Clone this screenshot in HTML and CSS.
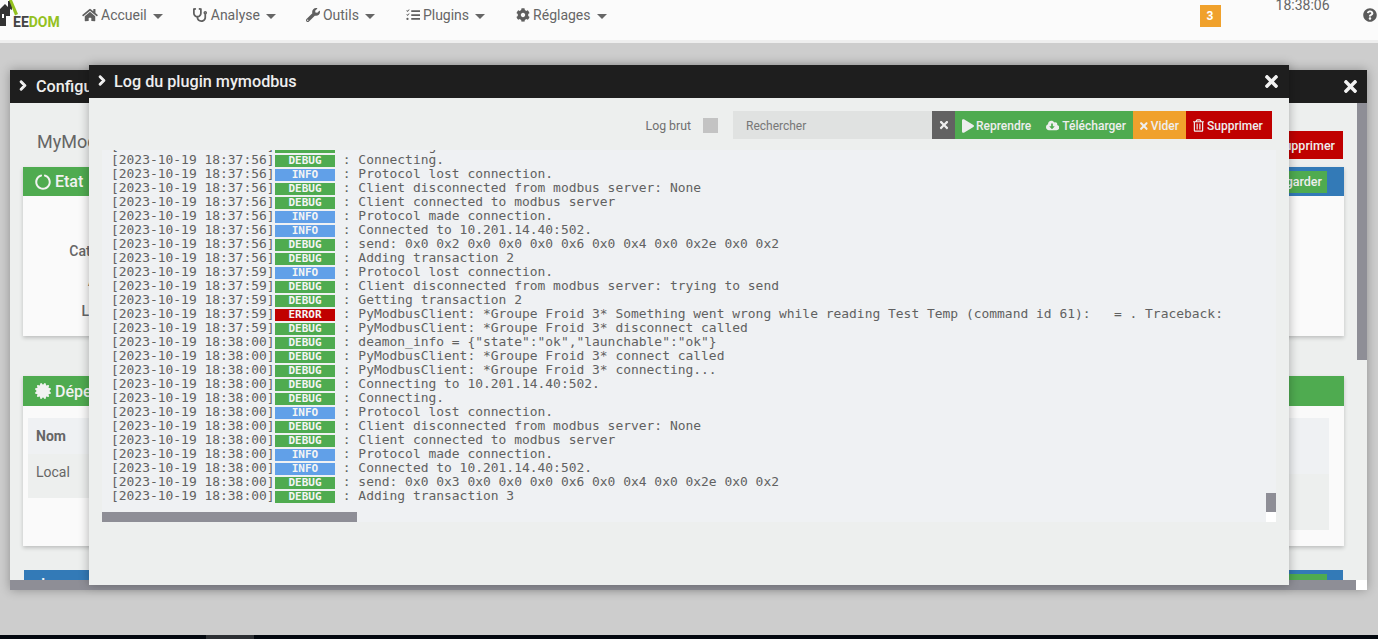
FILE: index.html
```html
<!DOCTYPE html>
<html lang="fr">
<head>
<meta charset="utf-8">
<title>Log du plugin mymodbus</title>
<link rel="stylesheet" href="styles.css">
</head>
<body>
<svg class="sprites" aria-hidden="true">
  <symbol id="i-home" viewBox="0 0 576 512"><path d="M280.37 148.26L96 300.11V464a16 16 0 0 0 16 16l112.06-.29a16 16 0 0 0 15.92-16V368a16 16 0 0 1 16-16h64a16 16 0 0 1 16 16v95.64a16 16 0 0 0 16 16.05L464 480a16 16 0 0 0 16-16V300L295.67 148.26a12.19 12.19 0 0 0-15.3 0zM571.6 251.47L488 182.56V44.05a12 12 0 0 0-12-12h-56a12 12 0 0 0-12 12v72.61L318.47 43a48 48 0 0 0-61 0L4.34 251.47a12 12 0 0 0-1.6 16.9l25.5 31A12 12 0 0 0 45.15 301l235.22-193.74a12.19 12.19 0 0 1 15.3 0L530.9 301a12 12 0 0 0 16.9-1.6l25.5-31a12 12 0 0 0-1.7-16.93z"/></symbol>
  <symbol id="i-steth" viewBox="0 0 512 512"><path d="M447.1 112c-34.2.5-62.3 28.4-63 62.6-.5 24.3 12.5 45.6 32 56.8V344c0 57.3-50.2 104-112 104-60 0-109.2-44.1-111.9-99.2C265 333.8 320 269.2 320 192V36.6c0-11.4-8.1-21.3-19.3-23.5L237.8.5c-13-2.6-25.6 5.8-28.2 18.8L206.4 35c-2.6 13 5.8 25.6 18.8 28.2l30.7 6.1v121.4c0 52.9-42.2 96.7-95.1 97.2-53.4.5-96.9-42.7-96.9-96V69.4l30.7-6.1c13-2.6 21.4-15.2 18.8-28.2l-3.1-15.7C107.7 6.4 95.1-2 82.1.6L19.3 13C8.1 15.3 0 25.1 0 36.6V192c0 77.3 55.1 142 128.1 156.8C130.7 439.2 208.6 512 304 512c97 0 176-75.4 176-168V231.4c19.1-11.1 32-31.7 32-55.4 0-35.7-29.2-64.5-64.9-64zm.9 80c-8.8 0-16-7.2-16-16s7.2-16 16-16 16 7.2 16 16-7.2 16-16 16z"/></symbol>
  <symbol id="i-wrench" viewBox="0 0 512 512"><path d="M507.73 109.1c-2.24-9.03-13.54-12.09-20.12-5.51l-74.36 74.36-67.88-11.31-11.31-67.88 74.36-74.36c6.62-6.62 3.43-17.9-5.66-20.16-47.38-11.74-99.55.91-136.58 37.93-39.64 39.64-50.55 97.1-34.05 147.2L18.74 402.76c-24.99 24.99-24.99 65.51 0 90.5 24.99 24.99 65.51 24.99 90.5 0l213.21-213.21c50.12 16.71 107.47 5.68 147.37-34.22 37.07-37.07 49.7-89.32 37.91-136.73zM64 472c-13.25 0-24-10.75-24-24 0-13.26 10.75-24 24-24s24 10.74 24 24c0 13.25-10.75 24-24 24z"/></symbol>
  <symbol id="i-tasks" viewBox="0 0 16 14"><path d="M6 1.5h10v2H6zM6 6h10v2H6zM6 10.500h10v2H6zM.4 2 1 1.400l.8.8L3.500.4l.6.6-2.300 2.500zM.4 6.500 1 5.900l.8.8 1.700-1.800.6.600-2.300 2.500z"/><circle cx="1.700" cy="11.500" r="1.300"/></symbol>
  <symbol id="i-cog" viewBox="0 0 512 512"><path d="M487.4 315.7l-42.6-24.6c4.3-23.2 4.3-47 0-70.2l42.6-24.6c4.9-2.8 7.1-8.6 5.5-14-11.1-35.6-30-67.8-54.7-94.6-3.8-4.1-10-5.1-14.8-2.3L380.8 110c-17.9-15.4-38.5-27.3-60.8-35.1V25.8c0-5.6-3.9-10.5-9.4-11.7-36.7-8.2-74.3-7.8-109.2 0-5.5 1.2-9.4 6.1-9.4 11.7V75c-22.2 7.9-42.8 19.8-60.8 35.1L88.7 85.5c-4.9-2.8-11-1.9-14.8 2.3-24.7 26.7-43.6 58.9-54.7 94.6-1.7 5.4.6 11.2 5.5 14L67.3 221c-4.3 23.2-4.3 47 0 70.2l-42.6 24.6c-4.9 2.8-7.1 8.6-5.5 14 11.1 35.6 30 67.8 54.7 94.6 3.8 4.1 10 5.1 14.8 2.3l42.6-24.6c17.9 15.4 38.5 27.3 60.8 35.1v49.2c0 5.6 3.9 10.5 9.4 11.7 36.7 8.2 74.3 7.8 109.2 0 5.5-1.2 9.4-6.1 9.4-11.7v-49.2c22.2-7.9 42.8-19.8 60.8-35.1l42.6 24.6c4.9 2.8 11 1.9 14.8-2.3 24.7-26.7 43.6-58.9 54.7-94.6 1.5-5.5-.7-11.3-5.6-14.1zM256 336c-44.1 0-80-35.9-80-80s35.9-80 80-80 80 35.9 80 80-35.9 80-80 80z"/></symbol>
  <symbol id="i-question" viewBox="0 0 512 512"><path d="M504 256c0 136.997-111.043 248-248 248S8 392.997 8 256C8 119.083 119.043 8 256 8s248 111.083 248 248zM262.655 90c-54.497 0-89.255 22.957-116.549 63.758-3.536 5.286-2.353 12.415 2.715 16.258l34.699 26.31c5.205 3.947 12.621 3.008 16.665-2.122 17.864-22.658 30.113-35.797 57.303-35.797 20.429 0 45.698 13.148 45.698 32.958 0 14.976-12.363 22.667-32.534 33.976C247.128 238.528 216 254.941 216 296v4c0 6.627 5.373 12 12 12h56c6.627 0 12-5.373 12-12v-1.333c0-28.462 83.186-29.647 83.186-106.667 0-58.002-60.165-102-116.531-102zM256 338c-25.365 0-46 20.635-46 46 0 25.364 20.635 46 46 46s46-20.636 46-46c0-25.365-20.635-46-46-46z"/></symbol>
  <symbol id="i-times" viewBox="0 0 352 512"><path d="M242.72 256l100.07-100.07c12.28-12.28 12.28-32.19 0-44.48l-22.24-22.24c-12.28-12.28-32.19-12.28-44.48 0L176 189.28 75.930 89.21c-12.28-12.28-32.19-12.28-44.48 0L9.210 111.45c-12.28 12.28-12.28 32.19 0 44.48L109.28 256 9.210 356.07c-12.28 12.28-12.28 32.19 0 44.48l22.24 22.24c12.28 12.28 32.2 12.28 44.48 0L176 322.72l100.07 100.07c12.28 12.28 32.2 12.28 44.48 0l22.24-22.24c12.28-12.28 12.28-32.19 0-44.48L242.72 256z"/></symbol>
  <symbol id="i-play" viewBox="0 0 448 512"><path d="M424.4 214.7L72.4 6.6C43.8-10.3 0 6.1 0 47.9V464c0 37.5 40.7 60.1 72.4 41.3l352-208c31.4-18.5 31.5-64.1 0-82.6z"/></symbol>
  <symbol id="i-cloud" viewBox="0 0 640 512"><path d="M537.6 226.6c4.1-10.7 6.4-22.4 6.4-34.6 0-53-43-96-96-96-19.7 0-38.1 6-53.3 16.2C367 64.2 315.3 32 256 32c-88.4 0-160 71.6-160 160 0 2.7.1 5.4.2 8.1C40.2 219.8 0 273.2 0 336c0 79.5 64.5 144 144 144h368c70.7 0 128-57.3 128-128 0-61.9-44-113.6-102.4-125.4zm-132.9 88.7L299.3 420.7c-6.2 6.2-16.4 6.2-22.6 0L171.3 315.3c-10.1-10.1-2.9-27.3 11.3-27.3H248V176c0-8.8 7.2-16 16-16h48c8.8 0 16 7.2 16 16v112h65.4c14.2 0 21.4 17.2 11.3 27.3z"/></symbol>
  <symbol id="i-trash" viewBox="0 0 448 512"><path d="M268 416h24a12 12 0 0 0 12-12V188a12 12 0 0 0-12-12h-24a12 12 0 0 0-12 12v216a12 12 0 0 0 12 12zM432 80h-82.41l-34-56.7A48 48 0 0 0 274.41 0H173.59a48 48 0 0 0-41.16 23.3L98.41 80H16A16 16 0 0 0 0 96v16a16 16 0 0 0 16 16h16v336a48 48 0 0 0 48 48h288a48 48 0 0 0 48-48V128h16a16 16 0 0 0 16-16V96a16 16 0 0 0-16-16zM171.84 50.91A6 6 0 0 1 177 48h94a6 6 0 0 1 5.15 2.91L293.61 80H154.39zM368 464H80V128h288zm-212-48h24a12 12 0 0 0 12-12V188a12 12 0 0 0-12-12h-24a12 12 0 0 0-12 12v216a12 12 0 0 0 12 12z"/></symbol>
  <symbol id="i-chevron" viewBox="0 0 320 512"><path d="M285.476 272.971L91.132 467.314c-9.373 9.373-24.569 9.373-33.941 0l-22.667-22.667c-9.357-9.357-9.375-24.522-.04-33.901L188.505 256 34.484 101.255c-9.335-9.379-9.317-24.544.04-33.901l22.667-22.667c9.373-9.373 24.569-9.373 33.941 0L285.475 239.03c9.373 9.372 9.373 24.568.001 33.941z"/></symbol>
  <symbol id="i-notch" viewBox="0 0 512 512"><path d="M288 39.056v16.659c0 10.804 7.281 20.159 17.686 23.066C383.204 100.434 440 171.518 440 256c0 101.689-82.295 184-184 184-101.689 0-184-82.295-184-184 0-84.47 56.786-155.564 134.312-177.219C216.719 75.874 224 66.517 224 55.712V39.064c0-15.709-14.834-27.153-30.046-23.234C86.603 43.482 7.394 141.206 8.003 257.332c.72 137.052 111.477 246.956 248.531 246.667C393.255 503.711 504 392.788 504 256c0-115.633-79.14-212.779-186.211-240.236C302.678 11.889 288 23.456 288 39.056z"/></symbol>
  <symbol id="i-cert" viewBox="0 0 512 512"><path d="M458.622 255.92l45.985-45.005c13.708-12.977 7.316-36.039-10.664-40.339l-62.65-15.99 17.661-62.015c4.991-17.838-11.829-34.663-29.661-29.671l-61.994 17.667-15.984-62.671C337.085.197 313.765-6.276 300.99 7.228L256 53.57 211.011 7.229c-12.63-13.351-36.047-7.234-40.325 10.668l-15.984 62.671-61.995-17.667C74.87 57.907 58.056 74.738 63.046 92.572l17.661 62.015-62.65 15.99C.069 174.878-6.31 197.944 7.392 210.915l45.985 45.005-45.985 45.004c-13.708 12.977-7.316 36.039 10.664 40.339l62.65 15.99-17.661 62.015c-4.991 17.838 11.829 34.663 29.661 29.671l61.994-17.667 15.984 62.671c4.439 18.575 27.696 24.018 40.325 10.668L256 458.61l44.989 46.001c12.5 13.488 35.987 7.486 40.325-10.668l15.984-62.671 61.994 17.667c17.836 4.994 34.651-11.837 29.661-29.671l-17.661-62.015 62.65-15.99c17.987-4.302 24.366-27.367 10.664-40.339l-45.984-45.004z"/></symbol>
</svg>

<header class="navbar">
  <div class="brand">
    <svg class="brand-mark" viewBox="0 0 20 27" aria-hidden="true">
      <path class="brand-house" d="M0 9 5 4 8 7V1h4v9l-2-1v7H6v10H0z"/>
      <path class="brand-roof" d="M9 0h3l6 14-3 1.500z"/>
      <path class="brand-door" d="M2 14h2v4H2z"/>
    </svg>
    <span class="brand-name"><span class="brand-dark">EE</span>DOM</span>
  </div>
  <nav class="menu">
    <a class="menu-item"><svg class="ico ico-home"><use href="#i-home"/></svg>Accueil<i class="caret"></i></a>
    <a class="menu-item"><svg class="ico"><use href="#i-steth"/></svg>Analyse<i class="caret"></i></a>
    <a class="menu-item menu-item-spaced"><svg class="ico ico-tight"><use href="#i-wrench"/></svg>Outils<i class="caret"></i></a>
    <a class="menu-item menu-item-spaced"><svg class="ico ico-tight"><use href="#i-tasks"/></svg>Plugins<i class="caret"></i></a>
    <a class="menu-item"><svg class="ico ico-tight"><use href="#i-cog"/></svg>Réglages<i class="caret"></i></a>
  </nav>
  <div class="nav-right">
    <span class="badge-count">3</span>
    <span class="clock">18:38:06</span>
    <svg class="ico-help"><use href="#i-question"/></svg>
  </div>
</header>

<main class="stage">
  <section class="dialog dialog-back">
    <div class="dialog-title">
      <svg class="title-chevron"><use href="#i-chevron"/></svg>
      <span class="title-text">Configuration du plugin</span>
      <svg class="title-close"><use href="#i-times"/></svg>
    </div>
    <div class="back-body">
      <div class="back-head">
        <span class="back-name">MyModbus</span>
        <span class="back-btn red">Supprimer</span>
      </div>
      <div class="back-row">
        <article class="card card-state">
          <h3 class="card-head green"><svg class="card-ico"><use href="#i-notch"/></svg>Etat</h3>
          <div class="card-fields">
            <span class="field">Catégorie</span>
            <span class="field">Auteur</span>
            <span class="field">Licence</span>
          </div>
        </article>
        <article class="card">
          <div class="card-head blue card-head-right"><span class="back-btn green small">Sauvegarder</span></div>
        </article>
      </div>
      <article class="card card-deps">
        <h3 class="card-head green tall"><svg class="card-ico"><use href="#i-cert"/></svg>Dépendances</h3>
        <div class="deps-table">
          <div class="deps-col-left">
            <div class="deps-th">Nom</div>
            <div class="deps-td">Local</div>
          </div>
          <div class="deps-col-right">
            <div class="deps-rh"></div>
            <div class="deps-rd"></div>
          </div>
        </div>
      </article>
      <div class="card-head blue last-head"><span class="last-title">Logs</span><span class="last-btn"></span></div>
    </div>
    <div class="bar bar-back-h"></div>
    <div class="bar bar-back-v"></div>
    <div class="corner corner-back"></div>
  </section>

  <section class="dialog dialog-front">
    <div class="dialog-title">
      <svg class="title-chevron"><use href="#i-chevron"/></svg>
      <span class="title-text">Log du plugin mymodbus</span>
      <svg class="title-close"><use href="#i-times"/></svg>
    </div>
    <div class="front-body">
      <div class="toolbar">
        <span class="raw-label">Log brut</span>
        <span class="raw-check"></span>
        <span class="search">Rechercher</span>
        <span class="tbtn grey"><svg class="tico tico-x"><use href="#i-times"/></svg></span>
        <span class="tbtn green t-resume"><svg class="tico tico-play"><use href="#i-play"/></svg>Reprendre</span>
        <span class="tbtn green t-dl"><svg class="tico tico-cloud"><use href="#i-cloud"/></svg>Télécharger</span>
        <span class="tbtn orange t-clear"><svg class="tico tico-x"><use href="#i-times"/></svg>Vider</span>
        <span class="tbtn red t-del"><svg class="tico tico-trash"><use href="#i-trash"/></svg>Supprimer</span>
      </div>
      <div class="log">
        <div class="log-lines">
          <div class="row"><span class="ts">[2023-10-19 18:37:56]</span><span class="lvl debug">DEBUG</span><span class="msg"> : Connecting to 10.201.14.40:502.</span></div>
          <div class="row"><span class="ts">[2023-10-19 18:37:56]</span><span class="lvl debug">DEBUG</span><span class="msg"> : Connecting.</span></div>
          <div class="row"><span class="ts">[2023-10-19 18:37:56]</span><span class="lvl info">INFO</span><span class="msg"> : Protocol lost connection.</span></div>
          <div class="row"><span class="ts">[2023-10-19 18:37:56]</span><span class="lvl debug">DEBUG</span><span class="msg"> : Client disconnected from modbus server: None</span></div>
          <div class="row"><span class="ts">[2023-10-19 18:37:56]</span><span class="lvl debug">DEBUG</span><span class="msg"> : Client connected to modbus server</span></div>
          <div class="row"><span class="ts">[2023-10-19 18:37:56]</span><span class="lvl info">INFO</span><span class="msg"> : Protocol made connection.</span></div>
          <div class="row"><span class="ts">[2023-10-19 18:37:56]</span><span class="lvl info">INFO</span><span class="msg"> : Connected to 10.201.14.40:502.</span></div>
          <div class="row"><span class="ts">[2023-10-19 18:37:56]</span><span class="lvl debug">DEBUG</span><span class="msg"> : send: 0x0 0x2 0x0 0x0 0x0 0x6 0x0 0x4 0x0 0x2e 0x0 0x2</span></div>
          <div class="row"><span class="ts">[2023-10-19 18:37:56]</span><span class="lvl debug">DEBUG</span><span class="msg"> : Adding transaction 2</span></div>
          <div class="row"><span class="ts">[2023-10-19 18:37:59]</span><span class="lvl info">INFO</span><span class="msg"> : Protocol lost connection.</span></div>
          <div class="row"><span class="ts">[2023-10-19 18:37:59]</span><span class="lvl debug">DEBUG</span><span class="msg"> : Client disconnected from modbus server: trying to send</span></div>
          <div class="row"><span class="ts">[2023-10-19 18:37:59]</span><span class="lvl debug">DEBUG</span><span class="msg"> : Getting transaction 2</span></div>
          <div class="row"><span class="ts">[2023-10-19 18:37:59]</span><span class="lvl error">ERROR</span><span class="msg"> : PyModbusClient: *Groupe Froid 3* Something went wrong while reading Test Temp (command id 61):   = . Traceback:</span></div>
          <div class="row"><span class="ts">[2023-10-19 18:37:59]</span><span class="lvl debug">DEBUG</span><span class="msg"> : PyModbusClient: *Groupe Froid 3* disconnect called</span></div>
          <div class="row"><span class="ts">[2023-10-19 18:38:00]</span><span class="lvl debug">DEBUG</span><span class="msg"> : deamon_info = {"state":"ok","launchable":"ok"}</span></div>
          <div class="row"><span class="ts">[2023-10-19 18:38:00]</span><span class="lvl debug">DEBUG</span><span class="msg"> : PyModbusClient: *Groupe Froid 3* connect called</span></div>
          <div class="row"><span class="ts">[2023-10-19 18:38:00]</span><span class="lvl debug">DEBUG</span><span class="msg"> : PyModbusClient: *Groupe Froid 3* connecting...</span></div>
          <div class="row"><span class="ts">[2023-10-19 18:38:00]</span><span class="lvl debug">DEBUG</span><span class="msg"> : Connecting to 10.201.14.40:502.</span></div>
          <div class="row"><span class="ts">[2023-10-19 18:38:00]</span><span class="lvl debug">DEBUG</span><span class="msg"> : Connecting.</span></div>
          <div class="row"><span class="ts">[2023-10-19 18:38:00]</span><span class="lvl info">INFO</span><span class="msg"> : Protocol lost connection.</span></div>
          <div class="row"><span class="ts">[2023-10-19 18:38:00]</span><span class="lvl debug">DEBUG</span><span class="msg"> : Client disconnected from modbus server: None</span></div>
          <div class="row"><span class="ts">[2023-10-19 18:38:00]</span><span class="lvl debug">DEBUG</span><span class="msg"> : Client connected to modbus server</span></div>
          <div class="row"><span class="ts">[2023-10-19 18:38:00]</span><span class="lvl info">INFO</span><span class="msg"> : Protocol made connection.</span></div>
          <div class="row"><span class="ts">[2023-10-19 18:38:00]</span><span class="lvl info">INFO</span><span class="msg"> : Connected to 10.201.14.40:502.</span></div>
          <div class="row"><span class="ts">[2023-10-19 18:38:00]</span><span class="lvl debug">DEBUG</span><span class="msg"> : send: 0x0 0x3 0x0 0x0 0x0 0x6 0x0 0x4 0x0 0x2e 0x0 0x2</span></div>
          <div class="row"><span class="ts">[2023-10-19 18:38:00]</span><span class="lvl debug">DEBUG</span><span class="msg"> : Adding transaction 3</span></div>
        </div>
        <div class="bar bar-log-h"></div>
        <div class="bar bar-log-v"></div>
        <div class="corner corner-log"></div>
      </div>
    </div>
  </section>
</main>

<footer class="taskbar"><span class="task-tab"></span></footer>
</body>
</html>
```

FILE: styles.css
```css
* { box-sizing: border-box; }

html, body { height: 100%; }

body {
  margin: 0;
  height: 100vh;
  display: flex;
  flex-direction: column;
  overflow: hidden;
  background: #cdcdcd;
  color: #666;
  font-family: Roboto, "Liberation Sans", sans-serif;
  font-size: 14px;
}

.sprites { display: none; }

/* Navbar */
.navbar {
  flex: none;
  height: 43px;
  display: flex;
  background: #fbfbfb;
  border-bottom: 3px solid #eeeeee;
  position: relative;
}

.brand { width: 82px; height: 30px; flex: none; position: relative; overflow: hidden; }
.brand-mark { position: absolute; left: 0; top: 0; width: 20px; height: 27px; }
.brand-house { fill: #333; }
.brand-roof { fill: #94c11f; }
.brand-door { fill: #fbfbfb; }
.brand-name {
  position: absolute;
  left: 13px;
  top: 14px;
  font-size: 14px;
  line-height: 16px;
  font-weight: 700;
  color: #94c11f;
}
.brand-dark { color: #444; }

.menu { display: flex; gap: 30px; height: 30px; align-items: center; }
.menu-item { display: flex; align-items: center; color: #666; line-height: 30px; }
.menu-item-spaced { margin-right: 1px; }
.ico { width: 14px; height: 14px; fill: #5f5f5f; margin-right: 4px; }
.ico-home { width: 16px; margin-right: 3px; }
.ico-tight { margin-right: 3px; }
.caret {
  width: 0;
  height: 0;
  margin-left: 6px;
  margin-top: 2px;
  border-left: 5px solid transparent;
  border-right: 5px solid transparent;
  border-top: 5px solid #666;
}

.nav-right { position: relative; flex: 1; }
.badge-count {
  position: absolute;
  left: 593px;
  top: 5px;
  width: 21px;
  height: 22px;
  background: #f0a12c;
  color: #fff;
  font-size: 12px;
  font-weight: 700;
  line-height: 23px;
  text-align: center;
}
.clock { position: absolute; left: 669px; top: -3px; line-height: 16px; font-size: 14px; }
.ico-help { position: absolute; left: 756px; top: 8px; width: 14px; height: 14px; fill: #5a5a5a; }

/* Desktop */
.stage { flex: 1; position: relative; }

.taskbar { flex: none; height: 4px; background: #03080f; }
.task-tab { display: block; width: 48px; height: 4px; margin-left: 206px; background: #2c2f33; }

.dialog {
  position: absolute;
  height: 520px;
  background: #edefee;
  box-shadow: 0 0 10px rgba(0, 0, 0, .3);
  overflow: hidden;
}
.dialog-back { left: 10px; top: 27px; width: 1357px; }
.dialog-front { left: 89px; top: 22px; width: 1200px; }

.dialog-title {
  height: 33px;
  display: flex;
  align-items: center;
  background: #1e1e1e;
  color: #eee;
  font-size: 16.2px;
  font-weight: 500;
  padding: 0 11px 0 9px;
}
.title-chevron { width: 8px; height: 11px; fill: #f2f2f2; stroke: #f2f2f2; stroke-width: 50; margin: 0 8px 3px 0; overflow: visible; }
.title-text { flex: 1; white-space: nowrap; }
.title-close { width: 13px; height: 19px; fill: #f2f2f2; }
.dialog-back .title-chevron { margin-right: 9px; }
.dialog-back .dialog-title { padding-right: 10px; }

/* Background dialog */
.back-body { padding: 28px 23px 0 13px; }
.back-head { display: flex; justify-content: space-between; align-items: center; height: 28px; margin-bottom: 8px; padding: 0 1px 0 14px; }
.back-name { font-size: 18px; color: #666; margin-bottom: 8px; }
.back-btn {
  display: flex;
  align-items: center;
  color: #eee;
  font-size: 12.5px;
  font-weight: 500;
  height: 28px;
  padding: 0 8px;
}
.red { background: #c00000; }
.green { background: #4fab50; }
.orange { background: #f0a12c; }
.grey { background: #626262; }
.blue { background: #337ab7; }

.back-row { display: grid; grid-template-columns: 1fr 1fr; gap: 0 8px; }
.card { background: #fafafa; height: 169px; box-shadow: 0 2px 4px rgba(0, 0, 0, .2); }
.card-head {
  margin: 0;
  height: 29px;
  display: flex;
  align-items: center;
  padding: 0 12px;
  color: #f2f2f2;
  font-size: 16px;
  font-weight: 500;
}
.card-head.tall { height: 30px; }
.card-head-right { justify-content: flex-end; padding: 0 17px; }
.back-btn.small { height: 22px; padding: 0 5px; }
.card-ico { width: 16px; height: 16px; fill: #f2f2f2; margin-right: 4px; }
.card-fields { display: flex; flex-direction: column; align-items: flex-end; width: 107px; padding-top: 47px; gap: 14px; font-size: 14px; font-weight: 500; line-height: 16px; color: #666; }
.field { white-space: nowrap; }

.card-deps { margin-top: 40px; height: 170px; }
.deps-table { display: flex; justify-content: space-between; padding: 12px 15px 0 5px; }
.deps-col-left { width: 200px; }
.deps-th { height: 36px; line-height: 36px; background: #eff1f3; padding-left: 8px; font-weight: 700; }
.deps-td { height: 44px; line-height: 36px; background: #edefee; padding-left: 8px; }
.deps-col-right { flex: 1; }
.deps-rh { height: 56px; background: #eff1f3; }
.deps-rd { height: 56px; background: #edefee; }

.last-head { margin: 24px 1px 0; height: 40px; align-items: flex-start; justify-content: space-between; padding: 4px 16px 0 17px; }
.last-title { line-height: 16px; margin-top: 3px; }
.last-btn { width: 38px; height: 22px; background: #4fab50; }

.bar { position: absolute; background: #8e8e96; }
.corner { position: absolute; background: #fff; }
.bar-back-h { left: 0; bottom: 0; width: 1346px; height: 10px; }
.bar-back-v { right: 0; top: 33px; width: 10px; height: 257px; }
.corner-back { right: 0; bottom: 0; width: 11px; height: 10px; }

/* Foreground dialog */
.front-body { padding: 13px 13px 0; }
.toolbar { display: flex; justify-content: flex-end; align-items: center; height: 28px; padding-right: 4px; margin-bottom: 11px; }
.raw-label { font-size: 12.3px; margin: 2px 12px 0 0; color: #707070; }
.raw-check { width: 15px; height: 15px; background: #c3c3c3; margin: 0 15px 0 0; }
.search { width: 199px; height: 28px; line-height: 30px; background: #e0e2e1; color: #777; font-size: 12px; padding-left: 13px; }
.tbtn {
  height: 28px;
  display: flex;
  align-items: center;
  color: #eee;
  font-size: 12px;
  font-weight: 500;
  padding: 1px 7px 0;
  white-space: nowrap;
}
.tbtn.grey { width: 23px; justify-content: center; padding: 0; }
.t-resume { width: 84px; }
.t-dl { width: 94px; }
.t-clear { width: 53px; }
.t-del { width: 86px; }
.tico { fill: #eee; margin-right: 2px; height: 12px; }
.tico-x { width: 10px; }
.t-clear .tico-x { margin-right: 3px; }
.grey .tico-x { margin: 0; }
.tico-play { width: 12px; height: 14px; }
.tico-cloud { width: 16px; height: 13px; margin-right: 3px; }
.tico-trash { width: 11px; height: 13px; margin-right: 3px; }

.log {
  position: relative;
  height: 372px;
  background: #eff1f3;
  overflow: hidden;
}
.log-lines { margin-top: -10px; padding-left: 9px; font-family: "DejaVu Sans Mono", monospace; font-size: 12.95px; color: #616161; }
.row { height: 14px; display: flex; align-items: center; white-space: pre; }
.ts { flex: none; width: 164px; margin-bottom: 3px; }
.msg { margin-bottom: 3px; }
.lvl { width: 60px; height: 12px; flex: none; font-size: 11px; font-weight: 700; line-height: 12px; text-align: center; color: #f4f4f4; }
.debug { background: #4fab50; }
.info { background: #61a0e8; }
.error { background: #c00000; }
.bar-log-h { left: 0; bottom: 0; width: 255px; height: 10px; }
.bar-log-v { right: 0; bottom: 10px; width: 10px; height: 19px; }
.corner-log { right: 0; bottom: 0; width: 10px; height: 10px; }
```
